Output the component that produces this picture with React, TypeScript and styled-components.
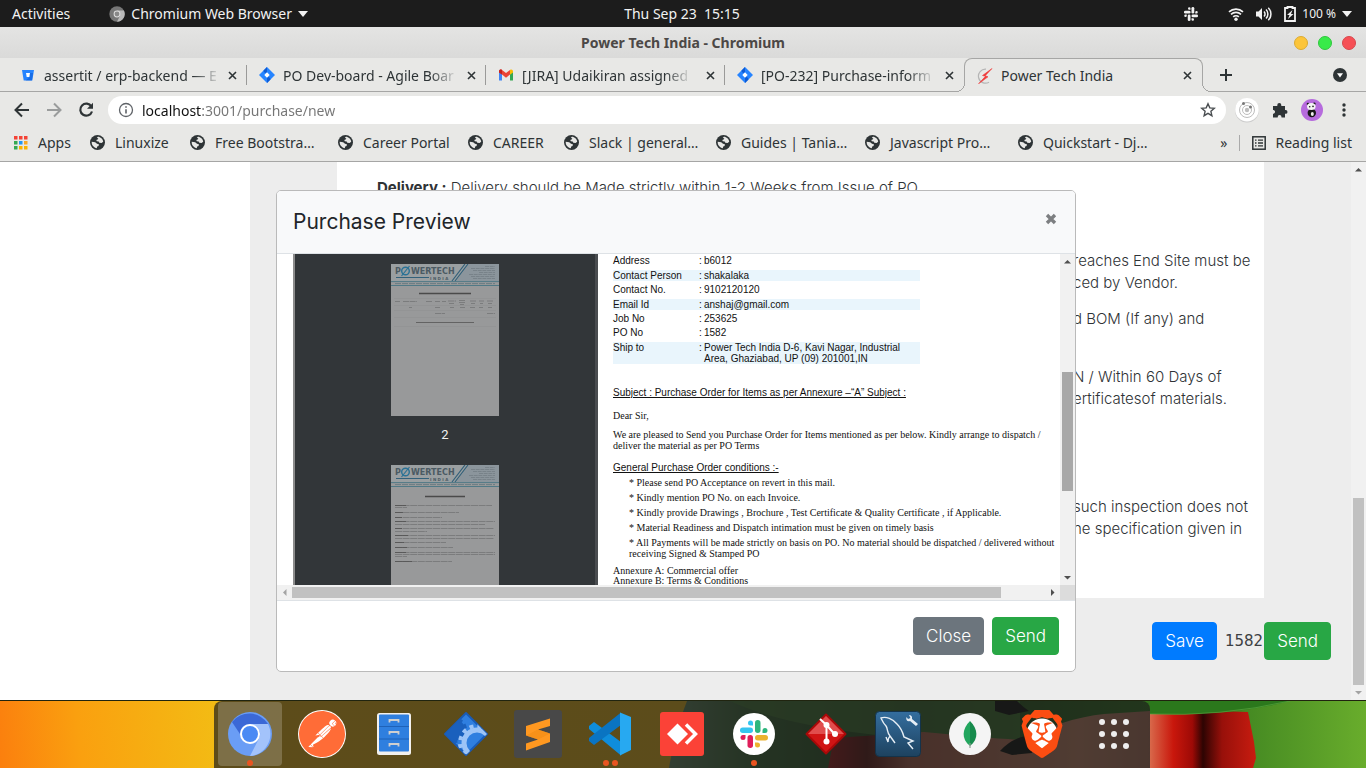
import React from 'react';
import styled, { createGlobalStyle, css } from 'styled-components';
import { SiBrave, SiPostman } from 'react-icons/si';

const UI = '"Noto Sans", "Open Sans", sans-serif';
const PAGE = 'Inter, "Open Sans", sans-serif';
const INK = '#2e3436';
const CHROME = '#e8e8e6';
const LINE = '#a6a6a5';

const Global = createGlobalStyle`
  *, *::before, *::after { box-sizing: border-box; }
  body { margin: 0; background: ${CHROME}; font-family: ${UI}; }
  button { font: inherit; color: inherit; border: 0; background: none; padding: 0; cursor: pointer; }
  svg { display: block; flex: none; }
`;

const Desktop = styled.div`
  display: flex;
  flex-direction: column;
  height: 100vh;
  overflow: hidden;
`;

/* ---------- desktop top bar ---------- */

const TopBar = styled.header`
  display: grid;
  grid-template-columns: 1fr auto 1fr;
  align-items: center;
  flex: none;
  height: 27px;
  padding: 0 14px 0 12px;
  background: #1c1c1c;
  color: #f2f2f2;
  font-size: 14px;
`;

const TopGroup = styled.div<{ $end?: boolean }>`
  display: flex;
  align-items: center;
  gap: ${p => (p.$end ? 12 : 39)}px;
  justify-content: ${p => (p.$end ? 'flex-end' : 'flex-start')};
`;

const TopButton = styled.button<{ $small?: boolean }>`
  display: flex;
  align-items: center;
  gap: 6px;
  white-space: pre;
  font-size: ${p => (p.$small ? 12 : 14)}px;
`;

const SlackSlot = styled.span`
  margin-right: 18px;
`;

/* ---------- window title ---------- */

const TitleBar = styled.div`
  display: grid;
  grid-template-columns: 1fr auto 1fr;
  align-items: center;
  flex: none;
  height: 31px;
  padding: 0 10px;
  background: linear-gradient(#e4e4e3, #dadad9);
  color: #4c4846;
  font-size: 14px;
  font-weight: 700;
`;

const WindowButtons = styled.div`
  grid-column: 3;
  display: flex;
  justify-content: flex-end;
  gap: 10px;
`;

const WindowButton = styled.button<{ $fill: string; $edge: string }>`
  width: 14px;
  height: 14px;
  border-radius: 50%;
  background: ${p => p.$fill};
  border: 1px solid ${p => p.$edge};
`;

const WindowTitle = styled.div`
  grid-column: 2;
`;

/* ---------- tabs ---------- */

const TabStrip = styled.nav`
  display: flex;
  flex: none;
  height: 34px;
  padding-left: 8px;
  color: ${INK};
  font-size: 14px;
  box-shadow: inset 0 -1px ${LINE};
`;

const flare = css`
  content: '';
  position: absolute;
  bottom: 0;
  width: 9px;
  height: 9px;
`;

const Tab = styled.div<{ $active?: boolean; $divider?: boolean }>`
  position: relative;
  display: flex;
  align-items: center;
  flex: 0 1 239px;
  min-width: 0;
  padding: 0 7px 0 12px;
  ${p =>
    p.$divider &&
    css`
      &::after {
        content: '';
        position: absolute;
        right: 0;
        top: 7px;
        width: 1px;
        height: 20px;
        background: #9a9a99;
      }
    `}
  ${p =>
    p.$active &&
    css`
      background: ${CHROME};
      border: 1px solid ${LINE};
      border-bottom: 0;
      border-radius: 8px 8px 0 0;
      &::before {
        ${flare}
        left: -9px;
        background: radial-gradient(circle at 0 0, transparent 8px, ${LINE} 8px, ${LINE} 9px, ${CHROME} 9px);
      }
      &::after {
        ${flare}
        right: -9px;
        background: radial-gradient(circle at 100% 0, transparent 8px, ${LINE} 8px, ${LINE} 9px, ${CHROME} 9px);
      }
    `}
`;

const TabLink = styled.a`
  display: flex;
  align-items: center;
  gap: 8px;
  flex: 1;
  min-width: 0;
  color: inherit;
  text-decoration: none;
`;

const TabTitle = styled.span<{ $fade?: boolean }>`
  white-space: nowrap;
  mask-image: ${p => (p.$fade ? 'linear-gradient(to right, #000 86%, rgba(0, 0, 0, 0.15))' : 'none')};
`;

const IconButton = styled.button<{ $size?: number }>`
  display: flex;
  align-items: center;
  justify-content: center;
  flex: none;
  width: ${p => p.$size ?? 24}px;
  height: ${p => p.$size ?? 24}px;
`;

const TabTail = styled.div`
  display: flex;
  align-items: center;
  justify-content: space-between;
  flex: 1;
  padding: 0 14px 0 11px;
`;

/* ---------- address bar ---------- */

const Toolbar = styled.div`
  display: flex;
  align-items: center;
  flex: none;
  gap: 8px;
  height: 36px;
  padding: 0 10px;
`;

const Omnibox = styled.div`
  display: flex;
  align-items: center;
  flex: 1;
  gap: 8px;
  height: 28px;
  margin-left: 2px;
  padding: 0 6px 0 10px;
  border-radius: 14px;
  background: #fff;
`;

const UrlInput = styled.input`
  flex: 1;
  min-width: 0;
  padding: 0;
  border: 0;
  outline: 0;
  font: 14px ${UI};
  background: linear-gradient(to right, #111 60px, #757575 60px);
  background-clip: text;
  -webkit-text-fill-color: transparent;
`;

/* ---------- bookmarks ---------- */

const Bookmarks = styled.nav`
  display: flex;
  align-items: center;
  flex: none;
  height: 34px;
  padding: 0 14px 4px;
  border-bottom: 1px solid ${LINE};
  color: ${INK};
  font-size: 14px;
`;

const Bookmark = styled.a<{ $w: number }>`
  display: flex;
  align-items: center;
  gap: 10px;
  flex: 0 0 ${p => p.$w}px;
  color: inherit;
  text-decoration: none;
  white-space: nowrap;
`;

const BookmarkTail = styled.div`
  display: flex;
  align-items: center;
  gap: 12px;
  margin-left: auto;
`;

const ReadingList = styled.button`
  display: flex;
  align-items: center;
  gap: 9px;
`;

const Divider = styled.span`
  width: 1px;
  height: 16px;
  background: #aaa;
`;

/* ---------- page ---------- */

const Viewport = styled.main`
  position: relative;
  display: flex;
  flex: 1;
  min-height: 0;
  overflow: hidden;
  background: #ededed;
  color: #2f3336;
  font-family: ${PAGE};
`;

const SideColumn = styled.aside`
  flex: 0 0 250px;
  background: #fff;
`;

const PageColumn = styled.section`
  flex: 1;
  min-width: 0;
`;

const Paper = styled.article`
  height: 436px;
  margin: 0 87px;
  padding: 15px 0 0 40px;
  overflow: hidden;
  background: #fff;
  font-size: 15px;
  line-height: 22px;
  white-space: nowrap;
`;

const Clause = styled.p`
  margin: 0 0 14px;
  font-weight: 300;
  b { font-weight: 700; }
`;

const ClauseEnds = styled.div`
  margin: 51px 0 0 696px;
`;

const Actions = styled.div`
  display: flex;
  align-items: center;
  justify-content: flex-end;
  margin-top: 24px;
  padding-right: 20px;
`;

const OrderNumber = styled.span`
  padding: 0 1px 0 8px;
  color: #3c4043;
  font: 15px "DejaVu Sans", sans-serif;
`;

const tones = { primary: '#007bff', success: '#28a745', secondary: '#6c757d' };

const Button = styled.button<{ $tone: keyof typeof tones }>`
  height: 38px;
  padding: 0 12px;
  border: 1px solid ${p => tones[p.$tone]};
  border-radius: 4px;
  background: ${p => tones[p.$tone]};
  color: #fff;
  font: 300 17px ${PAGE};
`;

/* ---------- scroll bars ---------- */

const Track = styled.div<{ $row?: boolean }>`
  display: flex;
  flex-direction: ${p => (p.$row ? 'row' : 'column')};
  align-items: center;
  justify-content: space-between;
  flex: 0 0 15px;
  background: #f1f1f1;
`;

const Thumb = styled.div<{ $before: number; $size: number; $after: number; $row?: boolean; $dark?: boolean }>`
  display: flex;
  flex-direction: ${p => (p.$row ? 'row' : 'column')};
  flex: 1;
  align-self: stretch;
  padding: ${p => (p.$row ? '2px 0' : '0 2px')};
  &::before { content: ''; flex: ${p => p.$before}; }
  &::after { content: ''; flex: ${p => p.$after}; }
  > i { flex: ${p => p.$size}; background: ${p => (p.$dark ? '#a8a8a8' : '#c1c1c1')}; }
`;

const Arrow = ({ dir, faint }: { dir: 'up' | 'down' | 'left' | 'right'; faint?: boolean }) => {
  const d = { up: 'M4 9.500h7L7.500 6z', down: 'M4 6h7L7.500 9.500z', left: 'M9.500 4v7L6 7.500z', right: 'M6 4v7l3.500-3.500z' }[dir];
  return (
    <svg width="15" height="15" viewBox="0 0 15 15">
      <path d={d} fill={faint ? '#a3a3a3' : '#505050'} />
    </svg>
  );
};

/* ---------- modal ---------- */

const ModalLayer = styled.div`
  position: absolute;
  inset: 28px 14px auto 0;
  display: flex;
  justify-content: center;
`;

const Modal = styled.div`
  display: flex;
  flex-direction: column;
  width: 800px;
  height: 482px;
  overflow: hidden;
  border: 1px solid #bababa;
  border-radius: 5px;
  background: #fff;
`;

const ModalHeader = styled.div`
  display: flex;
  align-items: flex-start;
  justify-content: space-between;
  flex: 0 0 63px;
  padding: 16px 12px 0 16px;
  border-bottom: 1px solid #dee2e6;
  background: #f8f9fa;
`;

const ModalTitle = styled.h2`
  margin: 0;
  color: #212529;
  font-size: 21px;
  font-weight: 400;
  line-height: 30px;
`;

const ModalBody = styled.div`
  display: grid;
  grid-template: minmax(0, 1fr) 15px / minmax(0, 1fr) 15px;
  flex: 1;
  min-height: 0;
`;

const Corner = styled.div`
  background: #dcdcdc;
`;

const ModalFooter = styled.div`
  display: flex;
  justify-content: flex-end;
  flex: 0 0 71px;
  gap: 8px;
  padding: 16px;
  border-top: 1px solid #dee2e6;
`;

const Preview = styled.div`
  display: flex;
  overflow: hidden;
  padding-left: 16px;
`;

const Thumbs = styled.div`
  display: flex;
  flex-direction: column;
  align-items: center;
  flex: 0 0 305px;
  gap: 11px;
  padding-top: 10px;
  border-left: 2px solid #8c8c8c;
  border-right: 3px solid #4a4d50;
  background: #323639;
`;

const ThumbLabel = styled.div`
  flex: none;
  height: 27px;
  color: #f1f1f1;
  font: 13px/16px Roboto, sans-serif;
`;

const Letter = styled.div`
  flex: 1;
  min-width: 0;
  padding-left: 15px;
  color: #111;
  font: 10px/11px "Liberation Serif", serif;
`;

const Details = styled.table`
  width: 307px;
  margin-top: -2px;
  border-spacing: 0 4px;
  font: 10px/10px "Liberation Sans", sans-serif;
`;

const Row = styled.tr<{ $striped?: boolean }>`
  background: ${p => (p.$striped ? '#e9f5fc' : 'transparent')};
  line-height: ${p => (p.$striped ? 11 : 10)}px;
  th, td { padding: 0; font-weight: 400; text-align: left; vertical-align: top; }
  th { width: 86px; }
  td:nth-child(2) { width: 5px; }
`;

const Heading = styled.h3<{ $top: number }>`
  margin: ${p => p.$top}px 0 0;
  font: 10px/12px "Liberation Sans", sans-serif;
  text-decoration: underline;
`;

const Para = styled.p<{ $top: number }>`
  margin: ${p => p.$top}px 0 0;
`;

const Annexures = styled.p`
  margin: 7px 0 0;
  line-height: 10px;
`;

const Terms = styled.ul`
  display: flex;
  flex-direction: column;
  gap: 4px;
  margin: 3px 0 0;
  padding: 0 0 0 16px;
  list-style: none;
`;

/* ---------- dock ---------- */

const DockArea = styled.footer`
  position: relative;
  display: flex;
  justify-content: center;
  flex: 0 0 68px;
  padding-right: 2px;
  border-top: 1px solid #20240f;
  overflow: hidden;
`;

const Wallpaper = styled.svg`
  position: absolute;
  inset: 0;
  width: 100%;
  height: 100%;
`;

const Dock = styled.nav`
  position: relative;
  display: flex;
  gap: 8px;
  height: 67px;
  padding: 1px 4px 0;
  border-radius: 8px 8px 0 0;
  background: rgba(28, 28, 28, 0.7);
`;

const DockItem = styled.button<{ $active?: boolean }>`
  position: relative;
  display: flex;
  align-items: center;
  justify-content: center;
  width: 64px;
  height: 64px;
  border-radius: 4px;
  background: ${p => (p.$active ? 'rgba(255, 255, 255, 0.2)' : 'transparent')};
`;

const Dots = styled.span`
  position: absolute;
  bottom: 0;
  left: 0;
  right: 0;
  display: flex;
  justify-content: center;
  gap: 3px;
  > i { width: 6px; height: 6px; border-radius: 50%; background: #e95420; }
`;

/* ---------- icons ---------- */

const Cross = ({ size = 9 }: { size?: number }) => (
  <svg width={size} height={size} viewBox="0 0 9 9">
    <path d="M1 1l7 7M8 1L1 8" stroke={INK} strokeWidth="1.600" />
  </svg>
);

const Caret = () => (
  <svg width="10" height="6" viewBox="0 0 10 6"><path d="M0 0h10L5 6z" fill="#f2f2f2" /></svg>
);

const Globe = () => (
  <svg width="15" height="15" viewBox="0 0 15 15">
    <circle cx="7.500" cy="7.500" r="7.500" fill={INK} />
    <path d="M7.800 1.700C10.500 1.700 13 4 13.200 6.800L11.600 8 9.300 7.800 8.700 6.500 6.800 6.300 6.300 4.900 8 4.300 8.200 3.200 6.800 2.900z" fill={CHROME} />
    <path d="M1.700 6.800L5.200 7.300 7 8.800 8.900 9.300 8.600 10.900 7.200 11.500 6.800 13.200C3.900 12.800 1.500 10.200 1.700 6.800z" fill={CHROME} />
  </svg>
);

const Jira = () => (
  <svg width="16" height="16" viewBox="0 0 16 16">
    <path d="M8 0l8 8-8 8-8-8z" fill="#2684ff" />
    <path d="M8 0L4.500 3.500c.3 2 1.700 3 3.500 2.200zM8 16l3.500-3.500c-.3-2-1.700-3-3.500-2.200z" fill="#0f5bd3" />
    <path d="M8 5.300L10.700 8 8 10.700 5.300 8z" fill="#fff" />
  </svg>
);

const Bitbucket = () => (
  <svg width="16" height="16" viewBox="0 0 16 16">
    <path d="M2 3h12l-1.700 10.500H3.700z" fill="#2684ff" />
    <path d="M9.700 6H13l-1.100 7.500H5.500L9.700 10z" fill="#0f5bd3" opacity=".6" />
    <path d="M6 6h4l-.7 4H6.700z" fill="#fff" />
  </svg>
);

const Gmail = () => (
  <svg width="16" height="16" viewBox="0 0 16 16">
    <path d="M1 4v9.500h3V7z" fill="#4285f4" />
    <path d="M15 4v9.500h-3V7z" fill="#34a853" />
    <path d="M1 4.500C1 2.500 3 2 4 3l4 3 4-3v4.500L8 10.700 4 7.500 1 5.500z" fill="#ea4335" />
    <path d="M12 3c1.300-1 3-.3 3 1.500v1l-3 2.200z" fill="#fbbc04" />
    <path d="M1 4.500C1 2.500 3 2 4 3v4.500L1 5.500z" fill="#c5221f" />
  </svg>
);

const Bolt = () => (
  <svg width="16" height="16" viewBox="0 0 16 16">
    <path d="M9 1.200A7 7 0 1 0 12 14.200" fill="none" stroke="#b5b5b5" strokeWidth="1.200" />
    <path d="M15 .5L5.500 7.500l3 .8L1.500 15.800l9.500-7-2.800-1.100z" fill="#f03a3a" stroke="#f03a3a" strokeWidth=".6" />
  </svg>
);

const Back = ({ color = INK, flip }: { color?: string; flip?: boolean }) => (
  <svg width="16" height="16" viewBox="0 0 16 16">
    <path d={flip ? 'M1 8h13M8 1.500L14.500 8 8 14.500' : 'M15 8H2M8 1.500L1.500 8 8 14.500'} fill="none" stroke={color} strokeWidth="2" />
  </svg>
);

const Reload = () => (
  <svg width="16" height="16" viewBox="0 0 16 16">
    <path d="M13.400 4.500A6 6 0 1 0 14 9.500" fill="none" stroke={INK} strokeWidth="2.200" />
    <path d="M15 .8v6H9z" fill={INK} />
  </svg>
);

const Info = () => (
  <svg width="16" height="16" viewBox="0 0 16 16">
    <circle cx="8" cy="8" r="6.500" fill="none" stroke="#5f6368" strokeWidth="1.300" />
    <path d="M8 7.200v4.300M8 4.300v1.500" stroke="#5f6368" strokeWidth="1.600" />
  </svg>
);

const Star = () => (
  <svg width="16" height="16" viewBox="0 0 16 16">
    <path d="M8 1.800l1.800 4.100 4.500.4-3.400 3 1 4.400L8 11.400l-3.900 2.300 1-4.400-3.400-3 4.500-.4z" fill="none" stroke="#4a4e51" strokeWidth="1.400" />
  </svg>
);

const Puzzle = () => (
  <svg width="16" height="16" viewBox="0 0 16 16">
    <path d="M1 4h4.300V3a2 2 0 0 1 4 0v1H13v4h.6a1.900 1.900 0 0 1 0 3.800H13V15.500H9.500V15a1.900 1.900 0 0 0-3.800 0v.5H1V11.700h.6a1.900 1.900 0 0 0 0-3.700H1z" fill={INK} />
  </svg>
);

const Orbit = () => (
  <svg width="26" height="26" viewBox="0 0 26 26">
    <circle cx="13" cy="13.500" r="12" fill="#ccc" />
    <circle cx="13" cy="12.700" r="11.800" fill="#fff" />
    <g fill="none" stroke="#bdbdbd"><circle cx="13" cy="13" r="7.500" /><circle cx="13" cy="13" r="4.500" /></g>
    <circle cx="13" cy="13" r="2.200" fill="#bdbdbd" />
    <circle cx="9.500" cy="6.500" r="1.500" fill="#777" /><circle cx="16.500" cy="10" r="1.500" fill="#777" />
  </svg>
);

const Panda = () => (
  <svg width="22" height="22" viewBox="0 0 22 22">
    <circle cx="11" cy="11" r="11" fill="#b66bdd" />
    <ellipse cx="10.800" cy="14" rx="4.200" ry="4.200" fill="#171717" />
    <ellipse cx="11.300" cy="15" rx="1.500" ry="2" fill="#eee" />
    <circle cx="7" cy="5" r="1.300" fill="#171717" /><circle cx="13.300" cy="4.700" r="1.300" fill="#171717" />
    <ellipse cx="10.300" cy="7.600" rx="4.300" ry="3.500" fill="#f4f4f4" />
    <circle cx="8.700" cy="7.800" r=".8" fill="#171717" /><circle cx="12" cy="7.400" r=".8" fill="#171717" />
  </svg>
);

const Kebab = () => (
  <svg width="4" height="16" viewBox="0 0 4 16" fill={INK}>
    <circle cx="2" cy="3" r="1.700" /><circle cx="2" cy="8" r="1.700" /><circle cx="2" cy="13" r="1.700" />
  </svg>
);

const AppsGrid = () => {
  const colors = ['#f44336', '#f44336', '#f44336', '#34a853', '#2196f3', '#f9a825', '#34a853', '#fbb400', '#fbb400'];
  return (
    <svg width="14" height="14" viewBox="0 0 14 14">
      {colors.map((c, i) => <rect key={i} x={(i % 3) * 5} y={Math.floor(i / 3) * 5} width="3.500" height="3.500" fill={c} />)}
    </svg>
  );
};

const ListIcon = () => (
  <svg width="14" height="14" viewBox="0 0 14 14">
    <rect x=".8" y=".8" width="12.400" height="12.400" fill="none" stroke={INK} strokeWidth="1.500" />
    <path d="M3 4.200h1.500M6 4.200h5M3 7h1.500M6 7h5M3 9.800h1.500M6 9.800h5" stroke={INK} strokeWidth="1.300" />
  </svg>
);

const slackBars = (c: string[]) => (
  <>
    <g fill={c[0]}><rect x="0" y="7.500" width="13" height="5.500" rx="2.700" /><path d="M13 5.500h-2.500A2.500 2.500 0 1 1 13 3z" /></g>
    <g fill={c[1]}><rect x="15" y="0" width="5.500" height="13" rx="2.700" /><path d="M22.500 13v-2.500a2.500 2.500 0 1 1 2.500 2.500z" /></g>
    <g fill={c[2]}><rect x="15" y="15" width="13" height="5.500" rx="2.700" /><path d="M15 22.500h2.500a2.500 2.500 0 1 1-2.500 2.500z" /></g>
    <g fill={c[3]}><rect x="7.500" y="15" width="5.500" height="13" rx="2.700" /><path d="M5.500 15v2.500A2.500 2.500 0 1 1 3 15z" /></g>
  </>
);

const ChromeGrey = () => (
  <svg width="16" height="16" viewBox="0 0 16 16">
    <circle cx="8" cy="8" r="7.700" fill="#777" />
    <path d="M8 4.500h6.900A7.700 7.700 0 0 1 8 15.700l3-6z" fill="#b9b9b9" />
    <circle cx="8" cy="8" r="3.400" fill="#ddd" /><circle cx="8" cy="8" r="2.400" fill="#888" />
  </svg>
);

const Wifi = () => (
  <svg width="16" height="14" viewBox="0 0 16 14">
    <g fill="none" stroke="#f2f2f2" strokeWidth="1.700"><path d="M1 4.800a10.300 10.300 0 0 1 14 0" /><path d="M3 7.400a7.300 7.300 0 0 1 10 0" /><path d="M5.200 9.900a4 4 0 0 1 5.600 0" /></g>
    <circle cx="8" cy="12.300" r="1.700" fill="#f2f2f2" />
  </svg>
);

const Volume = () => (
  <svg width="16" height="14" viewBox="0 0 16 14">
    <path d="M0 4.500h2.500L6 1v12L2.500 9.500H0z" fill="#f2f2f2" />
    <g fill="none" stroke="#f2f2f2" strokeWidth="1.500"><path d="M8 4.500a3.500 3.500 0 0 1 0 5" /><path d="M10 2.500a6.300 6.300 0 0 1 0 9" /><path d="M12.300 .8a8.600 8.600 0 0 1 0 12.400" /></g>
  </svg>
);

const Battery = () => (
  <svg width="12" height="16" viewBox="0 0 12 16">
    <path d="M3.500 2V1h5v1H11v13H1V2z" fill="none" stroke="#f2f2f2" strokeWidth="1.800" />
    <path d="M8.500 4L3 9h2.500l-1.500 4L9.500 8H7z" fill="#f2f2f2" />
  </svg>
);

/* thumbnail of one printed page */
const Sheet = ({ terms }: { terms?: boolean }) => (
  <svg width="108" height="152" viewBox="0 0 108 152">
    <rect width="108" height="152" fill="#98999a" />
    <rect width="108" height="17" fill="#9a9fa1" />
    <path d="M78 0h30v17H65z" fill="#8b959c" />
    <path d="M74 0L61 17M77 0L64 17" stroke="#33617a" strokeWidth="1.200" />
    <g fontFamily="DejaVu Sans, sans-serif" fontWeight="700" fill="#4b5a63">
      <text x="4" y="10" fontSize="8">P</text>
      <text x="20" y="10" fontSize="8">WERTECH</text>
      <text x="39" y="16" fontSize="4">I N D I A</text>
    </g>
    <circle cx="14.500" cy="7" r="3.800" fill="none" stroke="#2a7296" strokeWidth="1.400" />
    <path d="M18.500 2l-8 10" stroke="#2a7296" strokeWidth="1.200" />
    <path d="M5 13.500h33" stroke="#33617a" />
    <path d="M94 2.500h10M80 4.500h24M82 6.500h22M88 8.500h16M78 10.500h26M80 12.500h24M82 14.500h22" stroke="#747d84" strokeWidth=".8" strokeDasharray="4 .7" />
    <path d="M0 17.600h108M0 21.500h108" stroke="#3d7181" strokeWidth=".8" />
    <path d="M4 19.600h100" stroke="#6a7d83" strokeDasharray="6 1" />
    {terms ? (
      <g stroke="#747576" strokeWidth=".8" strokeDasharray="7 .6">
        <path d="M34 31.500h40" stroke="#4a4a4a" strokeWidth="1.500" strokeDasharray="none" />
        <path d="M4 40.500h97M4 42.500h12M4 47.500h64M4 52.500h47M4 56.500h100M4 59.500h90M4 63.500h99M4 66.500h32M4 70.500h100M4 73.500h99M4 77.500h51M4 82.500h58M4 87.500h100M4 89.500h100M4 91.500h12M4 96.500h57" />
        <path d="M4 40.500h11M4 47.500h8M4 52.500h7M4 56.500h11M4 63.500h7M4 70.500h13M4 77.500h9M4 82.500h12M4 87.500h11M4 96.500h17" stroke="#505050" strokeDasharray="none" />
      </g>
    ) : (
      <g stroke="#747576" strokeWidth=".8" strokeDasharray="6 .6">
        <path d="M28 29.500h52" stroke="#4a4a4a" strokeWidth="1.500" strokeDasharray="none" />
        <path d="M4 37.500h5M12 37.500h14M35 37.500h6M44 37.500h5M51 37.500h4M57 37h8M68 36.500h6M79 37h6M88 37h5M96 37h6M68 38.500h6M58 39.500h5M69 40.500h4M80 39.500h4M89 39.500h3M97 39.500h4M18 43.500h3M44 43.500h5M59 43.500h4M69 43.500h5M79 43.500h5M88 43.500h4M97 43.500h4M44 49.500h10M96 49.500h8" />
        <path d="M25 58.500h58" stroke="#555" strokeDasharray="none" />
        <path d="M3 34.500h102M3 41.500h102M3 46.500h102M3 53.500h102M3 62.500h102" stroke="#8e8f90" strokeDasharray="none" strokeWidth=".5" />
      </g>
    )}
  </svg>
);

/* ---------- dock icons ---------- */

const DockChromium = () => (
  <svg width="44" height="44" viewBox="0 0 44 44">
    <circle cx="22" cy="22" r="22" fill="#6a9df5" />
    <path d="M4 10a22 22 0 0 1 36 2H22c-6 0-10 4-10 10z" fill="#3b68d6" />
    <path d="M22 12h18a22 22 0 0 1-18 32l8.700-17a10 10 0 0 0-8.700-15z" fill="#a3c3fb" />
    <circle cx="22" cy="22" r="10" fill="#fff" /><circle cx="22" cy="22" r="8" fill="#4a8af4" />
  </svg>
);

const PostmanDisc = styled.span`
  display: flex;
  align-items: center;
  justify-content: center;
  width: 48px;
  height: 48px;
  border-radius: 50%;
  background: #fff;
`;

const Cabinet = () => (
  <svg width="34" height="42" viewBox="0 0 34 42">
    <rect width="34" height="42" rx="2.500" fill="#f2f0ee" />
    <rect x="2" y="1.500" width="30" height="37" rx="1" fill="#2f7fdf" />
    <path d="M2 13.500h30M2 26h30" stroke="#1f62b8" />
    {[6.5, 18.5, 30.5].map(y => <path key={y} d={`M12.500 ${y + 3}v-2.500h9v2.500`} fill="none" stroke="#cfcfcf" strokeWidth="1.800" />)}
  </svg>
);

const GearDiamond = () => (
  <svg width="44" height="44" viewBox="0 0 44 44">
    <defs><clipPath id="gear"><path d="M22 1l21 21-21 21L1 22z" /></clipPath></defs>
    <path d="M22 1l21 21-21 21L1 22z" fill="#2f7fe0" stroke="#1a5bb5" strokeWidth="2" strokeLinejoin="round" />
    <g clipPath="url(#gear)">
      <circle cx="10" cy="18" r="11" fill="#1a60bd" stroke="#1a60bd" strokeWidth="4" strokeDasharray="4 3" />
      <circle cx="33" cy="31" r="13" fill="none" stroke="#9cc4f7" strokeWidth="5" />
      <circle cx="33" cy="31" r="17" fill="none" stroke="#9cc4f7" strokeWidth="4" strokeDasharray="4 4" />
    </g>
  </svg>
);

const Sublime = () => (
  <svg width="48" height="48" viewBox="0 0 48 48">
    <rect width="48" height="48" rx="3" fill="#484848" />
    <path d="M36 8.500L12 16v9.500l12 4-12 4v7L36 32v-8.500l-12-4 12-3.500z" fill="#ff9820" />
    <path d="M12 25.500l12 4 12-6-12-4z" fill="#f08a12" opacity=".5" />
  </svg>
);

const VsCode = () => (
  <svg width="44" height="44" viewBox="0 0 44 44">
    <path d="M1 14l5-4 27 20v13.500L1 17z" fill="#0f8ddb" />
    <path d="M1 29l5 4 27-20V.5L1 26z" fill="#0a74c2" />
    <path d="M32 .5L43 5v33l-11 5.500z" fill="#27a9f1" />
  </svg>
);

const AnyDesk = () => (
  <svg width="44" height="44" viewBox="0 0 44 44">
    <rect width="44" height="44" rx="3" fill="#fb4237" />
    <path d="M17.500 11.500L28 22 17.500 32.500 7 22z" fill="#fff" />
    <path d="M26 12.500l9.500 9.500-9.500 9.500" fill="none" stroke="#fff" strokeWidth="3.500" />
  </svg>
);

const SlackDisc = () => (
  <svg width="42" height="42" viewBox="0 0 42 42">
    <circle cx="21" cy="21" r="21" fill="#fff" />
    <g transform="translate(7 7)">{slackBars(['#36c5f0', '#2eb67d', '#ecb22e', '#e01e5a'])}</g>
  </svg>
);

const GitIcon = () => (
  <svg width="42" height="42" viewBox="0 0 42 42">
    <path d="M21 1.500L40.500 21 21 40.500 1.500 21z" fill="#d01414" stroke="#a80808" strokeWidth="2" strokeLinejoin="round" />
    <path d="M21 3l18 18H3z" fill="#ee7b7b" opacity=".55" />
    <path d="M15 6l6.500 6v16M21.500 12l8 9" fill="none" stroke="#fff" strokeWidth="2" />
    <circle cx="21.500" cy="12" r="3" fill="#fff" /><circle cx="30" cy="21" r="3" fill="#fff" /><circle cx="21.500" cy="28.500" r="3" fill="#fff" />
  </svg>
);

const Workbench = () => (
  <svg width="46" height="46" viewBox="0 0 46 46">
    <defs><linearGradient id="wb" x2="0" y2="1"><stop stopColor="#346e9f" /><stop offset="1" stopColor="#1d425f" /></linearGradient></defs>
    <rect x=".5" y=".5" width="45" height="45" rx="4" fill="url(#wb)" stroke="#14334a" />
    <path d="M15 25c-3-3-2-7-4-10C8 12 7 9 6 7c5-2 12 1 16 6 4 4 6 9 7 13l9 4-5 2 5 6M15 25l5 7M15 25c-2 2-2 3-2 6l-2-5" fill="none" stroke="#e6eef5" strokeWidth="1.400" />
    <path d="M34 4l1.500 3-2.500 1-1.500-2c-1 3 1 5 3.500 4l6 5 2-2-6-5c.5-3-1-4-3-4z" fill="#e6eef5" />
  </svg>
);

const Mongo = () => (
  <svg width="42" height="42" viewBox="0 0 42 42">
    <circle cx="21" cy="21" r="21" fill="#f4f4f4" />
    <path d="M21 8c8 8 9 18 0 25z" fill="#168a4c" /><path d="M21 8c-8 8-9 18 0 25z" fill="#22a65e" />
    <path d="M21 30v5" stroke="#8a9b90" strokeWidth="1.200" />
  </svg>
);

const BraveMark = styled.span`
  display: grid;
  place-items: center;
  width: 48px;
  height: 48px;
  color: #fb4d12;
  background: radial-gradient(circle, #fff 15px, transparent 16px);
`;

const AppGrid = () => (
  <svg width="30" height="30" viewBox="0 0 30 30" fill="#eee">
    {[3, 15, 27].map(y => [3, 15, 27].map(x => <circle key={`${x}-${y}`} cx={x} cy={y} r="3" />))}
  </svg>
);

const dockItems: { name: string; icon: React.ReactNode; dots?: number; active?: boolean }[] = [
  { name: 'Chromium', icon: <DockChromium />, dots: 1, active: true },
  { name: 'Postman', icon: <PostmanDisc><SiPostman size={46} color="#ff6c37" /></PostmanDisc> },
  { name: 'Files', icon: <Cabinet /> },
  { name: 'Builder', icon: <GearDiamond /> },
  { name: 'Sublime Text', icon: <Sublime /> },
  { name: 'Visual Studio Code', icon: <VsCode />, dots: 2 },
  { name: 'AnyDesk', icon: <AnyDesk /> },
  { name: 'Slack', icon: <SlackDisc />, dots: 1 },
  { name: 'Git', icon: <GitIcon /> },
  { name: 'MySQL Workbench', icon: <Workbench /> },
  { name: 'MongoDB Compass', icon: <Mongo /> },
  { name: 'Brave', icon: <BraveMark><SiBrave size={48} /></BraveMark> },
  { name: 'Show Applications', icon: <AppGrid /> },
];

const tabs = [
  { title: 'assertit / erp-backend — E', icon: <Bitbucket />, divider: true },
  { title: 'PO Dev-board - Agile Boar', icon: <Jira />, divider: true },
  { title: '[JIRA] Udaikiran assigned', icon: <Gmail />, divider: true },
  { title: '[PO-232] Purchase-inform', icon: <Jira /> },
  { title: 'Power Tech India', icon: <Bolt />, active: true },
];

const bookmarks: [string, number][] = [
  ['Linuxize', 100],
  ['Free Bootstra…', 148],
  ['Career Portal', 130],
  ['CAREER', 96],
  ['Slack | general…', 152],
  ['Guides | Tania…', 149],
  ['Javascript Pro…', 153],
  ['Quickstart - Dj…', 150],
];

const details: [string, React.ReactNode, boolean][] = [
  ['Address', 'b6012', false],
  ['Contact Person', 'shakalaka', true],
  ['Contact No.', '9102120120', false],
  ['Email Id', 'anshaj@gmail.com', true],
  ['Job No', '253625', false],
  ['PO No', '1582', false],
  ['Ship to', <>Power Tech India D-6, Kavi Nagar, Industrial<br />Area, Ghaziabad, UP (09) 201001,IN</>, true],
];

export default function App() {
  return (
    <Desktop>
      <Global />
      <TopBar>
        <TopGroup>
          <TopButton>Activities</TopButton>
          <TopButton><ChromeGrey />Chromium Web Browser<Caret /></TopButton>
        </TopGroup>
        <TopButton>{'Thu Sep 23  15:15'}</TopButton>
        <TopGroup $end>
          <SlackSlot><svg width="14" height="14" viewBox="0 0 28 28">{slackBars(['#f2f2f2', '#f2f2f2', '#f2f2f2', '#f2f2f2'])}</svg></SlackSlot>
          <Wifi />
          <Volume />
          <TopButton $small><Battery />100 %<Caret /></TopButton>
        </TopGroup>
      </TopBar>

      <TitleBar>
        <WindowTitle>Power Tech India - Chromium</WindowTitle>
        <WindowButtons>
          <WindowButton aria-label="Minimise" $fill="#fcc53a" $edge="#dcab31" />
          <WindowButton aria-label="Maximise" $fill="#38ea49" $edge="#2fc73e" />
          <WindowButton aria-label="Close window" $fill="#f65056" $edge="#d8474c" />
        </WindowButtons>
      </TitleBar>

      <TabStrip>
        {tabs.map(t => (
          <Tab key={t.title} $active={t.active} $divider={t.divider}>
            <TabLink href="#">{t.icon}<TabTitle $fade={!t.active}>{t.title}</TabTitle></TabLink>
            <IconButton $size={16} aria-label="Close tab"><Cross /></IconButton>
          </Tab>
        ))}
        <TabTail>
          <IconButton aria-label="New tab">
            <svg width="12" height="12" viewBox="0 0 12 12"><path d="M6 0v12M0 6h12" stroke={INK} strokeWidth="2" /></svg>
          </IconButton>
          <IconButton aria-label="Search tabs">
            <svg width="14" height="14" viewBox="0 0 14 14"><circle cx="7" cy="7" r="7" fill={INK} /><path d="M4 5.300h6L7 9.500z" fill="#fff" /></svg>
          </IconButton>
        </TabTail>
      </TabStrip>

      <Toolbar>
        <IconButton aria-label="Back"><Back /></IconButton>
        <IconButton aria-label="Forward"><Back flip color="#9a9c9c" /></IconButton>
        <IconButton aria-label="Reload"><Reload /></IconButton>
        <Omnibox>
          <Info />
          <UrlInput aria-label="Address" defaultValue="localhost:3001/purchase/new" />
          <IconButton aria-label="Bookmark this page"><Star /></IconButton>
        </Omnibox>
        <IconButton $size={26} aria-label="Extension"><Orbit /></IconButton>
        <IconButton aria-label="Extensions"><Puzzle /></IconButton>
        <IconButton aria-label="Profile"><Panda /></IconButton>
        <IconButton aria-label="Menu"><Kebab /></IconButton>
      </Toolbar>

      <Bookmarks>
        <Bookmark href="#" $w={76}><AppsGrid />Apps</Bookmark>
        {bookmarks.map(([label, w]) => (
          <Bookmark key={label} href="#" $w={w}><Globe />{label}</Bookmark>
        ))}
        <BookmarkTail>
          <button aria-label="More bookmarks">»</button>
          <Divider />
          <ReadingList><ListIcon />Reading list</ReadingList>
        </BookmarkTail>
      </Bookmarks>

      <Viewport>
        <SideColumn />
        <PageColumn>
          <Paper>
            <Clause><b>Delivery :</b> Delivery should be Made strictly within 1-2 Weeks from Issue of PO</Clause>
            <ClauseEnds>
              <Clause>reaches End Site must be<br />ced by Vendor.</Clause>
              <Clause>d BOM (If any) and<br />&nbsp;</Clause>
              <Clause>N / Within 60 Days of<br />ertificatesof materials.</Clause>
              <Clause>&nbsp;</Clause>
              <Clause>&nbsp;</Clause>
              <Clause>such inspection does not<br />he specification given in</Clause>
            </ClauseEnds>
          </Paper>
          <Actions>
            <Button $tone="primary">Save</Button>
            <OrderNumber>1582</OrderNumber>
            <Button $tone="success">Send</Button>
          </Actions>
        </PageColumn>
        <Track>
          <Arrow dir="up" />
          <Thumb $before={321} $size={187} $after={0}><i /></Thumb>
          <Arrow dir="down" faint />
        </Track>

        <ModalLayer>
          <Modal role="dialog" aria-label="Purchase Preview">
            <ModalHeader>
              <ModalTitle>Purchase Preview</ModalTitle>
              <IconButton aria-label="Close preview">
                <svg width="12" height="12" viewBox="0 0 12 12"><path d="M2 2l8 8M10 2l-8 8" stroke="#7d7f81" strokeWidth="3.400" /></svg>
              </IconButton>
            </ModalHeader>
            <ModalBody>
              <Preview>
                <Thumbs>
                  <Sheet />
                  <ThumbLabel>2</ThumbLabel>
                  <Sheet terms />
                </Thumbs>
                <Letter>
                  <Details>
                    <tbody>
                      {details.map(([label, value, striped]) => (
                        <Row key={label} $striped={striped}>
                          <th scope="row">{label}</th>
                          <td>:</td>
                          <td>{value}</td>
                        </Row>
                      ))}
                    </tbody>
                  </Details>
                  <Heading $top={19}>Subject : Purchase Order for Items as per Annexure –“A” Subject :</Heading>
                  <Para $top={11}>Dear Sir,</Para>
                  <Para $top={8}>We are pleased to Send you Purchase Order for Items mentioned as per below. Kindly arrange to dispatch / deliver the material as per PO Terms</Para>
                  <Heading $top={11}>General Purchase Order conditions :-</Heading>
                  <Terms>
                    <li>* Please send PO Acceptance on revert in this mail.</li>
                    <li>* Kindly mention PO No. on each Invoice.</li>
                    <li>* Kindly provide Drawings , Brochure , Test Certificate &amp; Quality Certificate , if Applicable.</li>
                    <li>* Material Readiness and Dispatch intimation must be given on timely basis</li>
                    <li>* All Payments will be made strictly on basis on PO. No material should be dispatched / delivered without<br />receiving Signed &amp; Stamped PO</li>
                  </Terms>
                  <Annexures>Annexure A: Commercial offer<br />Annexure B: Terms &amp; Conditions</Annexures>
                </Letter>
              </Preview>
              <Track>
                <Arrow dir="up" />
                <Thumb $before={103} $size={119} $after={79} $dark><i /></Thumb>
                <Arrow dir="down" />
              </Track>
              <Track $row>
                <Arrow dir="left" faint />
                <Thumb $row $before={0} $size={709} $after={44}><i /></Thumb>
                <Arrow dir="right" />
              </Track>
              <Corner />
            </ModalBody>
            <ModalFooter>
              <Button $tone="secondary">Close</Button>
              <Button $tone="success">Send</Button>
            </ModalFooter>
          </Modal>
        </ModalLayer>
      </Viewport>

      <DockArea>
        <Wallpaper viewBox="0 0 1366 67" preserveAspectRatio="none">
          <defs>
            <linearGradient id="sun" gradientUnits="userSpaceOnUse" x1="0" y1="67" x2="680" y2="0"><stop stopColor="#fb7f0e" /><stop offset=".12" stopColor="#faa00f" /><stop offset=".32" stopColor="#f3bb14" /><stop offset="1" stopColor="#f2bd18" /></linearGradient>
            <linearGradient id="leaf"><stop stopColor="#6a8f68" /><stop offset=".12" stopColor="#3a6a34" /><stop offset=".35" stopColor="#1f4a1a" /><stop offset=".75" stopColor="#357a1e" /><stop offset="1" stopColor="#69ad2c" /></linearGradient>
            <linearGradient id="fur"><stop stopColor="#a01818" /><stop offset=".12" stopColor="#5d1511" /><stop offset=".25" stopColor="#b0604a" /><stop offset=".78" stopColor="#c98768" /><stop offset="1" stopColor="#b3745c" /></linearGradient>
            <linearGradient id="red"><stop stopColor="#d8684a" /><stop offset=".22" stopColor="#c9170c" /><stop offset=".4" stopColor="#9d0a06" /><stop offset=".5" stopColor="#2d0402" /><stop offset=".68" stopColor="#98100a" /><stop offset="1" stopColor="#c81c10" /></linearGradient>
          </defs>
          <rect width="1366" height="67" fill="url(#sun)" />
          <path d="M687 0h679v67H669q6-38 18-67z" fill="url(#leaf)" />
          <path d="M730 0q60 28 190 38h100V0z" fill="#4d8b38" opacity=".6" />
          <path d="M828 67l6-30 90-6q60 6 100 8 40-22 80-26l46-3v57z" fill="url(#fur)" />
          <path d="M995 0h22q6 6 12 10l-20 4-14-4zM1000 50q14-16 36-16l-4 18-20 2z" fill="#0c100a" />
          <path d="M1150 8l98 3 6 30 2 16-3 10h-103z" fill="url(#red)" />
          <path d="M1150 0h140q-60 16-140 13z" fill="#2b781c" />
          <path d="M1150 13q70 3 140-13" fill="none" stroke="#5fae45" opacity=".6" />
        </Wallpaper>
        <Dock>
          {dockItems.map(d => (
            <DockItem key={d.name} aria-label={d.name} $active={d.active}>
              {d.icon}
              {d.dots && <Dots>{Array.from({ length: d.dots }, (_, i) => <i key={i} />)}</Dots>}
            </DockItem>
          ))}
        </Dock>
      </DockArea>
    </Desktop>
  );
}
